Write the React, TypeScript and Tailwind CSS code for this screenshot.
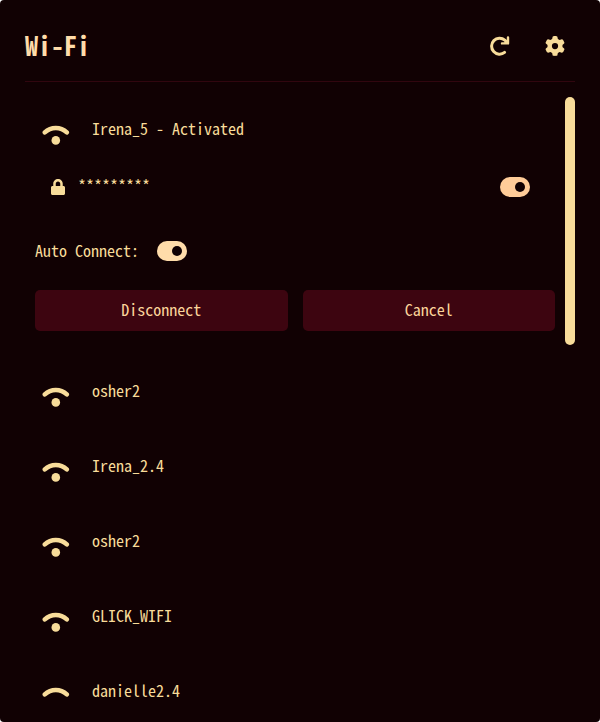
import { useState } from "react";
import { FaLock } from "react-icons/fa";
import { FaGear } from "react-icons/fa6";

const networks = ["osher2", "Irena_2.4", "osher2", "GLICK_WIFI", "danielle2.4"];

function WifiIcon() {
  return (
    <svg className="h-8 w-7 shrink-0" viewBox="0 0 28 32" fill="none" aria-hidden="true">
      <path d="M2.8 18.4C9 12.5 18.6 12.5 24.8 18.4" stroke="currentColor" strokeWidth="4.5" strokeLinecap="round" />
      <circle cx="13.8" cy="26.4" r="4.3" fill="currentColor" />
    </svg>
  );
}

function RefreshIcon() {
  return (
    <svg className="size-5" viewBox="0 0 20 20" fill="none" aria-hidden="true">
      <path d="M14.6 16.4A8 8 0 1 1 14.8 4.1L16.5 5.8" stroke="currentColor" strokeWidth="3" strokeLinecap="round" />
      <path d="M18 1.4V7.4H12" stroke="currentColor" strokeWidth="2.4" strokeLinecap="round" strokeLinejoin="round" />
      <path d="M18 2.8V7.4H13.4Z" fill="currentColor" />
    </svg>
  );
}

function Toggle({ id, label, tone }: { id: string; label?: string; tone: string }) {
  const [on, setOn] = useState(true);
  return (
    <span className={`relative flex h-5 w-[30px] shrink-0 items-center rounded-full px-[5px] ${tone}`}>
      <input
        id={id}
        type="checkbox"
        aria-label={label}
        checked={on}
        onChange={() => setOn(!on)}
        className="absolute inset-0 cursor-pointer appearance-none rounded-full"
      />
      <span className={`size-[10px] rounded-full bg-[#110103] ${on ? "ml-auto" : ""}`} />
    </span>
  );
}

function Network({ name }: { name: string }) {
  return (
    <button type="button" className="flex h-[65px] w-full shrink-0 items-center gap-[22px] px-[17px] text-left">
      <WifiIcon />
      <span className="pb-1">{name}</span>
    </button>
  );
}

export default function App() {
  const [password, setPassword] = useState("*********");
  return (
    <div className="bg-white">
      <main className="flex h-screen flex-col rounded-[4px] bg-[#110103] px-[25px] pt-[25px] pb-6 font-['Noto_Sans_Mono_CJK_SC','Liberation_Mono',monospace] text-base/6 text-[#f8dc9a]">
        <header className="flex h-[57px] shrink-0 items-start justify-between border-b border-[#31060f] pr-[10px]">
          <h1 className="text-[26px]/10 font-bold text-[#ffdcaa]">Wi-Fi</h1>
          <div className="flex h-[42px] items-center gap-[35px]">
            <button type="button" aria-label="Refresh"><RefreshIcon /></button>
            <button type="button" aria-label="Settings"><FaGear className="size-5" /></button>
          </div>
        </header>

        <div className="mt-[15px] flex min-h-0 flex-1 gap-[10px]">
          <div className="flex min-w-0 flex-1 flex-col overflow-hidden">
            <Network name="Irena_5 - Activated" />
            <section className="flex flex-col pb-7 pl-[10px]">
              <div className="flex h-[50px] items-center pr-[25px]">
                <FaLock className="ml-[15px] size-4 shrink-0" aria-hidden="true" />
                <input
                  aria-label="Password"
                  value={password}
                  onChange={(e) => setPassword(e.target.value)}
                  className="ml-3 min-w-0 flex-1 bg-transparent pb-1 outline-none"
                />
                <Toggle id="show-password" label="Show password" tone="bg-[#ffcc99]" />
              </div>
              <div className="flex h-[78px] items-center gap-[18px]">
                <label htmlFor="auto-connect" className="pb-0.5">Auto Connect:</label>
                <Toggle id="auto-connect" tone="bg-[#ffdcaa]" />
              </div>
              <div className="grid grid-cols-2 gap-[15px] text-[#fbd49a]">
                <button type="button" className="h-[41px] rounded-[5px] bg-[#3d0510] pb-1">Disconnect</button>
                <button type="button" className="h-[41px] rounded-[5px] bg-[#3d0510] pb-1">Cancel</button>
              </div>
            </section>
            <div className="flex flex-col gap-[10px]">
              {networks.map((name, i) => (
                <Network key={i} name={name} />
              ))}
            </div>
          </div>
          <div className="w-[10px] shrink-0">
            <div className="h-[248px] rounded-full bg-[#f8dc9a]" />
          </div>
        </div>
      </main>
    </div>
  );
}
